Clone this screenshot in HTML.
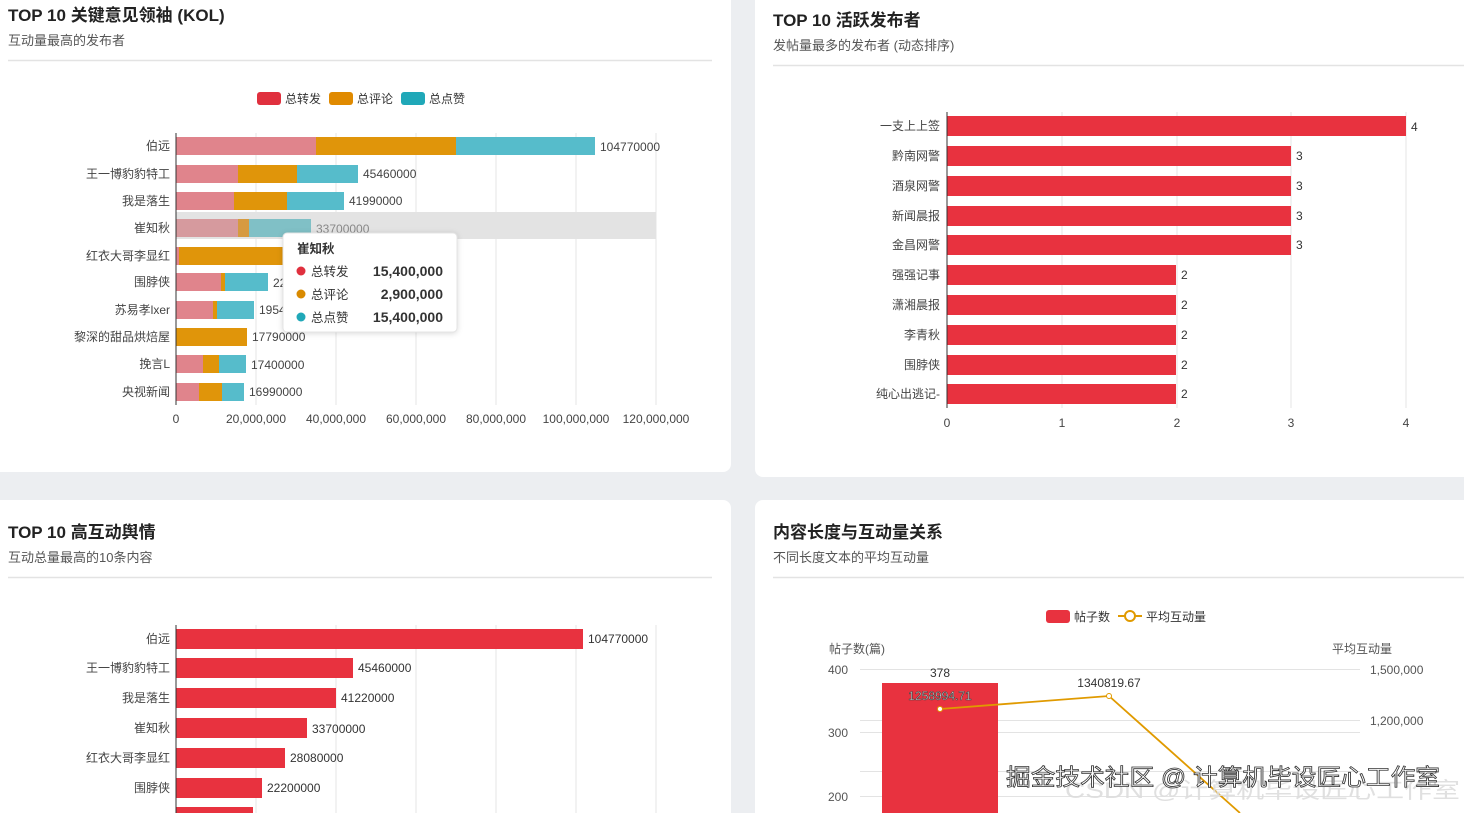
<!DOCTYPE html>
<html><head><meta charset="utf-8"><style>
html,body{margin:0;padding:0;width:1464px;height:813px;overflow:hidden;background:#eceef1;}
svg{display:block;font-family:"Liberation Sans","Noto Sans CJK SC",sans-serif;}
</style></head><body>
<svg width="1464" height="813" viewBox="0 0 1464 813">
<rect width="1464" height="813" fill="#eceef1"/>
<rect x="-10" y="-10" width="741" height="482" rx="8" fill="#fff"/>
<rect x="755" y="-10" width="720" height="487" rx="8" fill="#fff"/>
<rect x="-10" y="500" width="741" height="330" rx="8" fill="#fff"/>
<rect x="755" y="500" width="720" height="330" rx="8" fill="#fff"/>

<g font-weight="bold" font-size="17" fill="#222">
<text x="8" y="21">TOP 10 关键意见领袖 (KOL)</text>
<text x="773" y="26">TOP 10 活跃发布者</text>
<text x="8" y="538">TOP 10 高互动舆情</text>
<text x="773" y="538">内容长度与互动量关系</text>
</g>
<g font-size="13" fill="#555">
<text x="8" y="45">互动量最高的发布者</text>
<text x="773" y="50">发帖量最多的发布者 (动态排序)</text>
<text x="8" y="562">互动总量最高的10条内容</text>
<text x="773" y="562">不同长度文本的平均互动量</text>
</g>
<g stroke="#e3e3e3" stroke-width="1.5">
<line x1="8" y1="60.5" x2="712" y2="60.5"/>
<line x1="773" y1="65.5" x2="1464" y2="65.5"/>
<line x1="8" y1="577.5" x2="712" y2="577.5"/>
<line x1="773" y1="577.5" x2="1464" y2="577.5"/>
</g>

<g font-size="12" fill="#333">
<rect x="257" y="92" width="24" height="13" rx="3" fill="#e0303e"/><text x="285" y="103">总转发</text>
<rect x="329" y="92" width="24" height="13" rx="3" fill="#e08a00"/><text x="357" y="103">总评论</text>
<rect x="401" y="92" width="24" height="13" rx="3" fill="#20a8b8"/><text x="429" y="103">总点赞</text>
</g>
<g stroke="#e6e6e6"><line x1="256" y1="133" x2="256" y2="405"/><line x1="336" y1="133" x2="336" y2="405"/><line x1="416" y1="133" x2="416" y2="405"/><line x1="496" y1="133" x2="496" y2="405"/><line x1="576" y1="133" x2="576" y2="405"/><line x1="656" y1="133" x2="656" y2="405"/></g>
<rect x="176" y="212" width="480" height="27" fill="#e3e3e3"/>
<g>
<rect x="176" y="137" width="140" height="18" fill="#e0848c"/><rect x="316" y="137" width="140" height="18" fill="#e0950a"/><rect x="456" y="137" width="139" height="18" fill="#56bccb"/>
<rect x="176" y="165" width="62" height="18" fill="#e0848c"/><rect x="238" y="165" width="59" height="18" fill="#e0950a"/><rect x="297" y="165" width="61" height="18" fill="#56bccb"/>
<rect x="176" y="192" width="58" height="18" fill="#e0848c"/><rect x="234" y="192" width="53" height="18" fill="#e0950a"/><rect x="287" y="192" width="57" height="18" fill="#56bccb"/>
<rect x="176" y="219" width="62" height="18" fill="#d69a9e"/><rect x="238" y="219" width="11" height="18" fill="#d69a40"/><rect x="249" y="219" width="62" height="18" fill="#80c0c6"/>
<rect x="176" y="247" width="3" height="18" fill="#e0848c"/><rect x="179" y="247" width="109" height="18" fill="#e0950a"/>
<rect x="176" y="273" width="45" height="18" fill="#e0848c"/><rect x="221" y="273" width="4" height="18" fill="#e0950a"/><rect x="225" y="273" width="43" height="18" fill="#56bccb"/>
<rect x="176" y="301" width="37" height="18" fill="#e0848c"/><rect x="213" y="301" width="4" height="18" fill="#e0950a"/><rect x="217" y="301" width="37" height="18" fill="#56bccb"/>
<rect x="176" y="328" width="71" height="18" fill="#e0950a"/>
<rect x="176" y="355" width="27" height="18" fill="#e0848c"/><rect x="203" y="355" width="16" height="18" fill="#e0950a"/><rect x="219" y="355" width="27" height="18" fill="#56bccb"/>
<rect x="176" y="383" width="23" height="18" fill="#e0848c"/><rect x="199" y="383" width="23" height="18" fill="#e0950a"/><rect x="222" y="383" width="22" height="18" fill="#56bccb"/>
</g>
<g stroke="#333"><line x1="176" y1="133" x2="176" y2="405"/></g>
<g font-size="12" fill="#444" text-anchor="end">
<text x="170" y="150">伯远</text><text x="170" y="178">王一博豹豹特工</text><text x="170" y="205">我是落生</text><text x="170" y="232">崔知秋</text><text x="170" y="260">红衣大哥李显红</text><text x="170" y="286">围脖侠</text><text x="170" y="314">苏易孝lxer</text><text x="170" y="341">黎深的甜品烘焙屋</text><text x="170" y="368">挽言L</text><text x="170" y="396">央视新闻</text>
</g>
<g font-size="12" fill="#444">
<text x="600" y="151">104770000</text><text x="363" y="178">45460000</text><text x="349" y="205">41990000</text><text x="316" y="233" fill="#888">33700000</text><text x="273" y="287">22</text><text x="259" y="314">1954</text><text x="252" y="341">17790000</text><text x="251" y="369">17400000</text><text x="249" y="396">16990000</text>
</g>
<g font-size="12" fill="#444" text-anchor="middle">
<text x="176" y="423">0</text><text x="256" y="423">20,000,000</text><text x="336" y="423">40,000,000</text><text x="416" y="423">60,000,000</text><text x="496" y="423">80,000,000</text><text x="576" y="423">100,000,000</text><text x="656" y="423">120,000,000</text>
</g>
<rect x="283" y="233" width="174" height="99" rx="4" fill="#fff" stroke="#e4e4e4" style="filter:drop-shadow(0 1px 3px rgba(0,0,0,.15))"/>
<g font-size="12.5" fill="#333">
<text x="297" y="253" font-weight="bold">崔知秋</text>
<circle cx="301" cy="271" r="4.5" fill="#e0303e"/><text x="311" y="276">总转发</text><text x="443" y="276" text-anchor="end" font-weight="bold" font-size="14">15,400,000</text>
<circle cx="301" cy="294" r="4.5" fill="#d98a00"/><text x="311" y="299">总评论</text><text x="443" y="299" text-anchor="end" font-weight="bold" font-size="14">2,900,000</text>
<circle cx="301" cy="317" r="4.5" fill="#20a8b8"/><text x="311" y="322">总点赞</text><text x="443" y="322" text-anchor="end" font-weight="bold" font-size="14">15,400,000</text>
</g>

<g stroke="#e6e6e6"><line x1="1062" y1="112" x2="1062" y2="408"/><line x1="1177" y1="112" x2="1177" y2="408"/><line x1="1291" y1="112" x2="1291" y2="408"/><line x1="1406" y1="112" x2="1406" y2="408"/></g>
<g fill="#e8323f">
<rect x="947" y="116" width="459" height="20"/><rect x="947" y="146" width="344" height="20"/><rect x="947" y="176" width="344" height="20"/><rect x="947" y="206" width="344" height="20"/><rect x="947" y="235" width="344" height="20"/><rect x="947" y="265" width="229" height="20"/><rect x="947" y="295" width="229" height="20"/><rect x="947" y="325" width="229" height="20"/><rect x="947" y="355" width="229" height="20"/><rect x="947" y="384" width="229" height="20"/>
</g>
<line x1="947" y1="112" x2="947" y2="408" stroke="#333"/>
<g font-size="12" fill="#444" text-anchor="end">
<text x="940" y="130">一支上上签</text><text x="940" y="160">黔南网警</text><text x="940" y="190">酒泉网警</text><text x="940" y="220">新闻晨报</text><text x="940" y="249">金昌网警</text><text x="940" y="279">强强记事</text><text x="940" y="309">潇湘晨报</text><text x="940" y="339">李青秋</text><text x="940" y="369">围脖侠</text><text x="940" y="398">纯心出逃记-</text>
</g>
<g font-size="12" fill="#333">
<text x="1411" y="131">4</text><text x="1296" y="160">3</text><text x="1296" y="190">3</text><text x="1296" y="220">3</text><text x="1296" y="249">3</text><text x="1181" y="279">2</text><text x="1181" y="309">2</text><text x="1181" y="339">2</text><text x="1181" y="369">2</text><text x="1181" y="398">2</text>
</g>
<g font-size="12" fill="#444" text-anchor="middle"><text x="947" y="427">0</text><text x="1062" y="427">1</text><text x="1177" y="427">2</text><text x="1291" y="427">3</text><text x="1406" y="427">4</text></g>

<g stroke="#e6e6e6"><line x1="256" y1="625" x2="256" y2="813"/><line x1="336" y1="625" x2="336" y2="813"/><line x1="416" y1="625" x2="416" y2="813"/><line x1="496" y1="625" x2="496" y2="813"/><line x1="576" y1="625" x2="576" y2="813"/><line x1="656" y1="625" x2="656" y2="813"/></g>
<g fill="#e8323f">
<rect x="176" y="629" width="407" height="20"/><rect x="176" y="658" width="177" height="20"/><rect x="176" y="688" width="160" height="20"/><rect x="176" y="718" width="131" height="20"/><rect x="176" y="748" width="109" height="20"/><rect x="176" y="778" width="86" height="20"/><rect x="176" y="807" width="77" height="20"/>
</g>
<line x1="176" y1="625" x2="176" y2="813" stroke="#333"/>
<g font-size="12" fill="#444" text-anchor="end">
<text x="170" y="643">伯远</text><text x="170" y="672">王一博豹豹特工</text><text x="170" y="702">我是落生</text><text x="170" y="732">崔知秋</text><text x="170" y="762">红衣大哥李显红</text><text x="170" y="792">围脖侠</text>
</g>
<g font-size="12" fill="#333">
<text x="588" y="643">104770000</text><text x="358" y="672">45460000</text><text x="341" y="702">41220000</text><text x="312" y="733">33700000</text><text x="290" y="762">28080000</text><text x="267" y="792">22200000</text>
</g>

<g font-size="12" fill="#333">
<rect x="1046" y="610" width="24" height="13" rx="3" fill="#e8323f"/><text x="1074" y="621">帖子数</text>
<line x1="1118" y1="616" x2="1142" y2="616" stroke="#e09a00" stroke-width="2"/><circle cx="1130" cy="616" r="5" fill="#fff" stroke="#e09a00" stroke-width="2"/><text x="1146" y="621">平均互动量</text>
<text x="829" y="653" fill="#555">帖子数(篇)</text>
<text x="1392" y="653" fill="#555" text-anchor="end">平均互动量</text>
</g>
<g stroke="#e3e3e3"><line x1="860" y1="669.5" x2="1360" y2="669.5"/><line x1="860" y1="732.5" x2="1360" y2="732.5"/><line x1="860" y1="796.5" x2="1360" y2="796.5"/><line x1="860" y1="720.5" x2="1360" y2="720.5"/><line x1="860" y1="771.5" x2="1360" y2="771.5"/></g>
<g font-size="12" fill="#555">
<text x="848" y="674" text-anchor="end">400</text><text x="848" y="737" text-anchor="end">300</text><text x="848" y="801" text-anchor="end">200</text>
<text x="1370" y="674">1,500,000</text><text x="1370" y="725">1,200,000</text>
</g>
<rect x="882" y="683" width="116" height="140" fill="#e8323f"/>
<text x="940" y="677" font-size="12" fill="#333" text-anchor="middle">378</text>
<polyline points="940,709 1109,696 1240,813" fill="none" stroke="#e09a00" stroke-width="1.8"/>
<circle cx="940" cy="709" r="2.5" fill="#fff" stroke="#e09a00"/><circle cx="1109" cy="696" r="2.5" fill="#fff" stroke="#e09a00"/>
<text x="940" y="700" font-size="12" fill="#fff" text-anchor="middle" stroke="#444" stroke-width="0.6">1258994.71</text>
<text x="1109" y="687" font-size="12" fill="#333" text-anchor="middle">1340819.67</text>
<text x="1065" y="798" font-size="22" fill="#ddd" opacity="0.9" textLength="395" lengthAdjust="spacingAndGlyphs">CSDN @计算机毕设匠心工作室</text>
<text x="1006" y="785" font-size="23" fill="#fff" stroke="#333" stroke-width="0.8" textLength="434" lengthAdjust="spacingAndGlyphs">掘金技术社区 @ 计算机毕设匠心工作室</text>
</svg>
</body></html>
